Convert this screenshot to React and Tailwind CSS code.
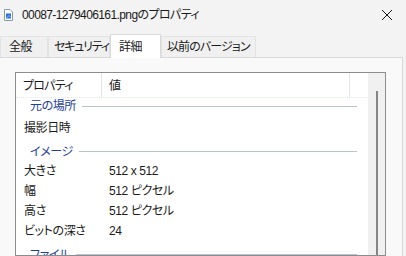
import React from 'react';

const font = { fontFamily: '"Liberation Sans", "Noto Sans CJK JP", sans-serif' };

const Group = ({ label, className = 'h-[23px] pt-[4px]' }) => (
  <div className={'shrink-0 flex items-center pl-[14px] pr-[11px] whitespace-nowrap ' + className}>
    <span className="text-[#1e4096] text-[12px] leading-[14px]">{label}</span>
    <div className="ml-[6px] flex-1 h-px bg-[#b9c3cf]" />
  </div>
);

const Row = ({ name, value }) => (
  <div className="shrink-0 h-[20px] flex items-center text-[12px] text-[#1a1a1a] leading-none whitespace-nowrap">
    <span className="w-[93px] pl-[8px]">{name}</span>
    <span>{value}</span>
  </div>
);

const Tab = ({ label, active, className = '' }) => (
  <div
    className={
      active
        ? 'h-[24px] -mb-px flex items-center bg-white border border-b-0 border-[#d9d9d9] text-[12px] text-[#1a1a1a] relative z-10 whitespace-nowrap ' + className
        : 'h-[21px] flex items-center border border-b-0 border-[#e3e3e3] text-[12px] text-[#1a1a1a] bg-[#f0f0f0] whitespace-nowrap ' + className
    }
  >
    {label}
  </div>
);

export default function App() {
  return (
    <div className="w-[406px] h-[256px] overflow-hidden bg-[#f3f3f3] [font-feature-settings:'palt'] tracking-[-0.4px]" style={font}>
      <div className="h-[30px] flex items-center pl-[4px] pr-[12px]">
        <svg width="9" height="12" viewBox="0 0 9 12" className="mr-[9px]">
          <path d="M0.5 0.5 H6 L8.5 3 V11.5 H0.5 Z" fill="#fff" stroke="#8a9bb0" />
          <rect x="2" y="4.5" width="5" height="5" fill="#2f6fd3" />
          <path d="M2.5 9 L5 6.5 L7 8.5" fill="none" stroke="#9fd0ff" strokeWidth="0.8" />
        </svg>
        <span className="text-[12px] text-[#1a1a1a] whitespace-nowrap tracking-[-0.6px]">00087-1279406161.pngのプロパティ</span>
        <svg width="12" height="12" viewBox="0 0 12 12" className="ml-auto mr-[1px]">
          <path d="M1 1 L11 11 M11 1 L1 11" stroke="#1a1a1a" strokeWidth="1" />
        </svg>
      </div>
      <div className="h-[27px] flex items-end">
        <Tab label="全般" className="w-[48px] pl-[8px]" />
        <Tab label="セキュリティ" className="w-[62px] pl-[5px] tracking-[-1.2px]" />
        <Tab label="詳細" active className="w-[51px] pl-[8px]" />
        <Tab label="以前のバージョン" className="pl-[5px] pr-[5px] tracking-[-0.9px]" />
      </div>
      <div className="h-[199px] mr-[3px] bg-[#f9f9f9] border-t border-r border-[#d9d9d9] pt-[14px] pl-[15px] pr-[16px] flex">
        <div className="flex-1 bg-white border border-[#8c8c8c] flex overflow-hidden">
          <div className="flex-1 flex flex-col">
            <div className="shrink-0 h-[25px] flex items-center text-[12px] text-[#1a1a1a] border-b border-dotted border-[#e6e6e6] whitespace-nowrap">
              <span className="w-[85px] pl-[7px] pt-[2px] tracking-[-0.8px]">プロパティ</span>
              <div className="w-px h-full bg-[#e5e5e5]" />
              <span className="pl-[7px] pt-[2px] flex-1">値</span>
              <div className="w-px h-full bg-[#e5e5e5] mr-[18px]" />
            </div>
            <Group label="元の場所" className="h-[20px] pb-[4px]" />
            <Row name="撮影日時" value="" />
            <Group label="イメージ" />
            <Row name="大きさ" value="512 x 512" />
            <Row name="幅" value="512 ピクセル" />
            <Row name="高さ" value="512 ピクセル" />
            <Row name="ビットの深さ" value="24" />
            <Group label="ファイル" />
          </div>
          <div className="w-[17px] shrink-0 bg-[#f0f0f0] flex justify-center pt-[18px]">
            <div className="w-[2px] h-full bg-[#858585]" />
          </div>
        </div>
      </div>
    </div>
  );
}
